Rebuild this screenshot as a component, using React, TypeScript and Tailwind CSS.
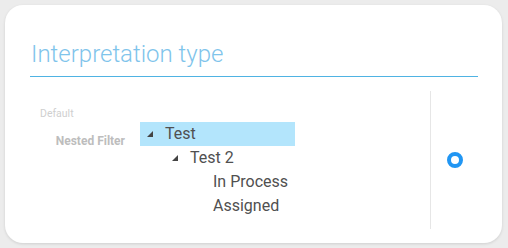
// Interpretation type card with a nested filter tree.
const font = { fontFamily: 'Roboto, "Noto Sans", sans-serif' };

function Triangle() {
  // small filled triangle pointing to the bottom-right (expanded node)
  return (
    <svg width="6" height="6" viewBox="0 0 6 6" className="shrink-0">
      <polygon points="6,0 6,6 0,6" fill="#444" />
    </svg>
  );
}

interface NodeProps {
  label: string;
  depth: number;
  expandable?: boolean;
  selected?: boolean;
}

function TreeRow({ label, depth, expandable, selected }: NodeProps) {
  const pad = ['pl-[7px]', 'pl-[32px]', 'pl-[73px]'][depth];
  return (
    <div
      className={`flex h-6 items-center ${pad} ${selected ? 'bg-[#b3e5fc]' : ''}`}
    >
      {expandable && (
        <span className="mr-[12px] flex items-center">
          <Triangle />
        </span>
      )}
      <span className="text-[16px] leading-6 text-[#505050]">{label}</span>
    </div>
  );
}

export default function App() {
  return (
    <div className="h-[248px] w-[508px] bg-[#ececec] pt-[5px] pl-[5px]" style={font}>
      <div className="flex h-[238px] w-[497px] flex-col rounded-[18px] bg-white pr-[24px] pl-[25px] shadow-[0_1px_3px_rgba(0,0,0,0.12)]">
        <h2 className="mt-[34px] pl-px text-[24px] leading-[30px] font-light text-[#7fc4eb]">
          Interpretation type
        </h2>
        <div className="mt-[7px] h-px bg-[#4fb3e3]" />
        <div className="mt-[14px] flex h-[138px]">
          <div className="flex flex-1 flex-col">
            <div className="pt-[17px] pl-[10px] text-[10.5px] leading-3 text-[#cfcfcf]">
              Default
            </div>
            <div className="mt-[2px] flex">
              <div className="w-[110px] pt-[12px] pr-[15px] text-right text-[12px] leading-[14px] font-bold text-[#bdbdbd]">
                Nested Filter
              </div>
              <div className="w-[155px]">
                <TreeRow label="Test" depth={0} expandable selected />
                <TreeRow label="Test 2" depth={1} expandable />
                <TreeRow label="In Process" depth={2} />
                <TreeRow label="Assigned" depth={2} />
              </div>
            </div>
          </div>
          <div className="flex w-[48px] items-center justify-center border-l border-[#e6e6e6]">
            <span className="block h-[16px] w-[16px] rounded-full border-[4px] border-[#2196f3]" />
          </div>
        </div>
      </div>
    </div>
  );
}
